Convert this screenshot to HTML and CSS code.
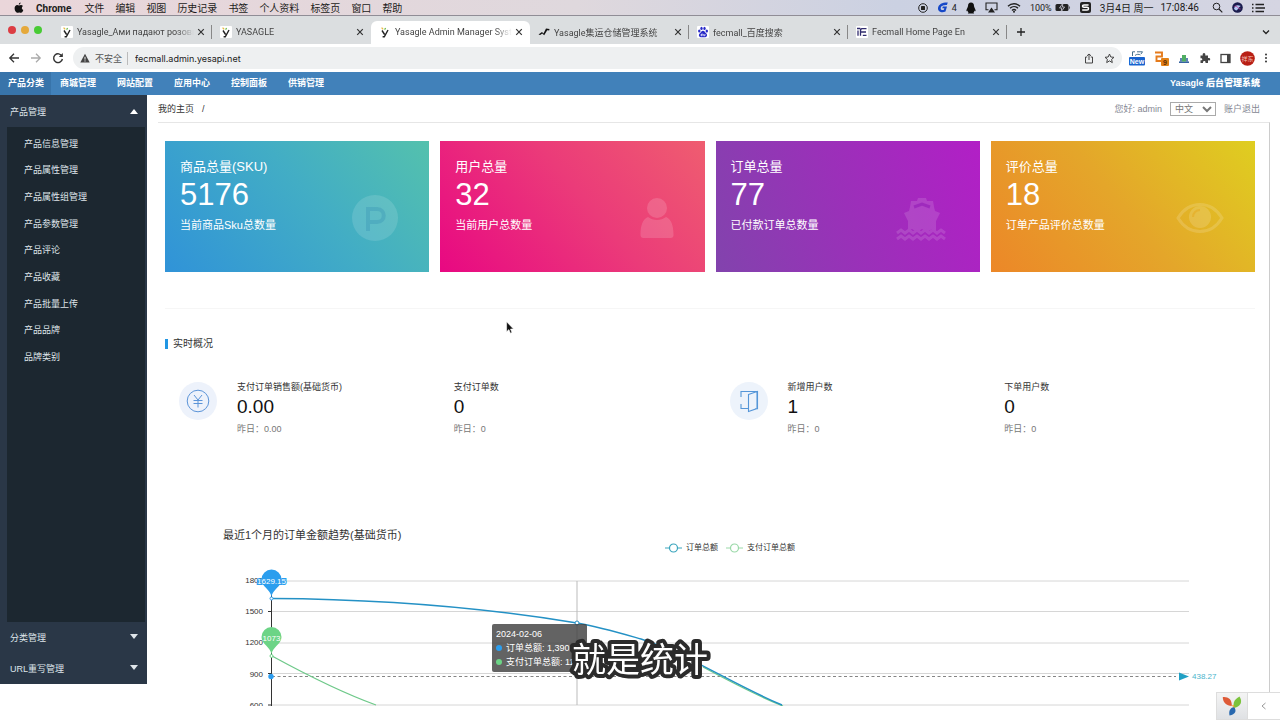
FILE: index.html
```html
<!DOCTYPE html>
<html lang="zh-CN">
<head>
<meta charset="utf-8">
<meta name="viewport" content="width=device-width, initial-scale=1">
<title>Yasagle Admin Manager System</title>
<link rel="stylesheet" href="styles.css">
</head>
<body>
<svg class="defs" width="0" height="0" aria-hidden="true">
  <symbol id="x" viewBox="0 0 8 8"><path d="M1.2 1.2l5.6 5.6M6.8 1.2L1.2 6.8" stroke="#333" stroke-width="1.2" fill="none"/></symbol>
  <symbol id="fav-y" viewBox="0 0 12 12"><rect width="12" height="12" rx="1" fill="#fff"/><path d="M3 4.5l2.6 4M9 4L5.3 10.8H3.6" stroke="#222" stroke-width="1.4" fill="none"/><path d="M2.6 1.6l1.6 1.8" stroke="#e9b63c" stroke-width="1.2"/><path d="M5.6 3.6l1-1.6" stroke="#67b94a" stroke-width="1.2"/></symbol>
</svg>

<header class="menubar">
  <svg class="apple" viewBox="0 0 10 12" width="10" height="12"><path d="M6.6 0.4c.1 1-.8 2.1-1.8 2.1C4.700 1.500 5.600.500 6.600.400zM5 3.400c.500 0 1.100-.500 2-.500.800 0 1.500.400 1.900 1C7.300 5 7.500 7.200 9.300 7.900c-.4 1.200-1.300 2.900-2.300 2.900-.7 0-1-.4-1.900-.4-.8 0-1.200.4-1.900.4C1.900 10.800.6 8.500.6 6.300c0-2 1.200-3.300 2.600-3.300.8 0 1.300.4 1.800.4z" fill="#111"/></svg>
  <nav class="menus">
    <b>Chrome</b><span>文件</span><span>编辑</span><span>视图</span><span>历史记录</span><span>书签</span><span>个人资料</span><span>标签页</span><span>窗口</span><span>帮助</span>
  </nav>
  <div class="status">
    <svg viewBox="0 0 10 10" width="10" height="10"><circle cx="5" cy="5" r="4.300" fill="none" stroke="#222"/><rect x="3" y="3" width="4" height="4" rx=".6" fill="#222"/></svg>
    <span class="pair"><svg viewBox="0 0 12 11" width="12" height="11"><path d="M10.800.5C6 .2 1.500 2 1 6c-.4 4 4 5 7.500 3.600L10 4.600H5.800L5.300 6.300h2l-.4 1.500C5 8.500 3.500 7.800 3.700 6c.3-2.200 3-2.900 6.200-2.900z" fill="#1648c8"/></svg>4</span>
    <svg viewBox="0 0 10 12" width="10" height="12"><path d="M5 .5c2 0 3 1.500 3 3.500 0 1.200 1.600 3 1.600 4.800 0 .6-.6.600-1.200-.2 0 1-.4 1.500-.9 1.900l.7.900H1.800l.7-.9c-.5-.4-.9-.9-.9-1.900-.6.800-1.200.800-1.200.2C.4 7 2 5.200 2 4 2 2 3 .5 5 .5z" fill="#111"/></svg>
    <svg viewBox="0 0 13 11" width="13" height="11"><path d="M3.500 7.800H1V1h11v6.800H9.500" fill="none" stroke="#222" stroke-width="1.100"/><path d="M6.500 5.500l3.500 5H3z" fill="#222"/></svg>
    <svg viewBox="0 0 14 11" width="14" height="11"><g fill="none" stroke="#222" stroke-width="1.400"><path d="M1 4.200c3.400-3.300 8.600-3.300 12 0"/><path d="M3 6.300c2.300-2.200 5.700-2.200 8 0"/><path d="M5 8.400c1.200-1.100 2.800-1.100 4 0"/></g><circle cx="7" cy="9.700" r="1" fill="#222"/></svg>
    <span class="pair">100%<svg viewBox="0 0 16 9" width="16" height="9"><rect x=".5" y="1" width="13" height="7" rx="1.500" fill="#222"/><path d="M14.300 3v3.200c1-.5 1-2.700 0-3.200z" fill="#222"/><path d="M8 0L4.500 5h2.300L6 9l3.600-5H7.300z" fill="#222" stroke="#d6d6e2" stroke-width=".8"/></svg></span>
    <svg viewBox="0 0 11 11" width="11" height="11"><rect width="11" height="11" rx="2" fill="#222"/><path d="M8.600 2.900H4C2 2.900 2 5.300 4 5.300h3c2 0 2 2.700 0 2.700H2.200" fill="none" stroke="#fff" stroke-width="1.500"/></svg>
    <span class="date">3月4日 周一</span><span class="clock">17:08:46</span>
    <svg viewBox="0 0 11 11" width="11" height="11"><circle cx="4.500" cy="4.500" r="3.300" fill="none" stroke="#222"/><path d="M7 7l3.300 3.300" stroke="#222" stroke-width="1.200"/></svg>
    <svg viewBox="0 0 11 11" width="11" height="11"><circle cx="5.500" cy="5.500" r="5.300" fill="#1b1c4e"/><path d="M2 7c1-4 3-4.500 7-3-2 0-2.400 4-5 4.500" fill="#b4c9f5"/><path d="M2.500 4.500C5 3 6 7 8.500 7" stroke="#c04b9c" fill="none"/></svg>
    <svg viewBox="0 0 13 10" width="13" height="10"><path d="M3.500 1.500H12M3.500 5H13M3.500 8.500H12" stroke="#222" stroke-width="1.400"/><path d="M0 1.500h1.500M0 5h1.500M0 8.500h1.500" stroke="#222" stroke-width="1.400"/></svg>
  </div>
</header>

<div class="tabstrip">
  <div class="lights"><i class="red"></i><i class="yellow"></i><i class="green"></i></div>
  <div class="tab sep"><svg class="fav"><use href="#fav-y"/></svg><span class="name">Yasagle_Ами падают розовые</span><button class="close" aria-label="关闭"><svg><use href="#x"/></svg></button></div>
  <div class="tab"><svg class="fav"><use href="#fav-y"/></svg><span class="name">YASAGLE</span><button class="close" aria-label="关闭"><svg><use href="#x"/></svg></button></div>
  <div class="tab active"><svg class="fav"><use href="#fav-y"/></svg><span class="name">Yasagle Admin Manager System</span><button class="close" aria-label="关闭"><svg><use href="#x"/></svg></button></div>
  <div class="tab sep"><svg class="fav" viewBox="0 0 12 12"><path d="M.5 8.500L4 6l1.500 1.500L8 2.500l3.500.5-.3 1.500-2-.3-3 5-2-1.700-2 1.500z" fill="#111"/></svg><span class="name">Yasagle集运仓储管理系统</span><button class="close" aria-label="关闭"><svg><use href="#x"/></svg></button></div>
  <div class="tab sep"><svg class="fav" viewBox="0 0 12 12"><rect width="12" height="12" rx="1" fill="#fff"/><g fill="#2a2bc8"><ellipse cx="2.300" cy="5" rx="1.200" ry="1.600"/><ellipse cx="4.500" cy="2.400" rx="1.200" ry="1.600"/><ellipse cx="7.500" cy="2.400" rx="1.200" ry="1.600"/><ellipse cx="9.800" cy="5" rx="1.200" ry="1.600"/><path d="M6 4.800c1.500 0 2.200 1.800 3.300 2.800 1.500 1.500.7 3.600-1 3.600H3.700c-1.700 0-2.500-2.100-1-3.600C3.800 6.600 4.500 4.800 6 4.800z"/></g><path d="M5.200 7.500v2.200H4V8.400h1.200M6.700 8v1.700h1.300V8" fill="none" stroke="#fff" stroke-width=".7"/></svg><span class="name">fecmall_百度搜索</span><button class="close" aria-label="关闭"><svg><use href="#x"/></svg></button></div>
  <div class="tab sep"><svg class="fav" viewBox="0 0 12 12"><rect width="12" height="12" rx="1" fill="#fff"/><path d="M1 2.500h3.300M2 4.500v5.300M10.500 2.600H6C4.500 2.600 4.500 4 4.500 5v4.800M5 6h5M6.800 9.300h3.700" fill="none" stroke="#302c6e" stroke-width="1.300"/></svg><span class="name">Fecmall Home Page En</span><button class="close" aria-label="关闭"><svg><use href="#x"/></svg></button></div>
  <button class="newtab" aria-label="新标签页"><svg viewBox="0 0 10 10" width="10" height="10"><path d="M5 1v8M1 5h8" stroke="#222" stroke-width="1.300"/></svg></button>
  <button class="more" aria-label="搜索标签页"><svg viewBox="0 0 8 8" width="8" height="8"><path d="M1 2.500l3 3 3-3" fill="none" stroke="#222" stroke-width="1.300"/></svg></button>
</div>

<div class="toolbar">
  <button aria-label="后退"><svg viewBox="0 0 12 12" width="12" height="12"><path d="M11 6H2M6 1.800L1.800 6 6 10.200" fill="none" stroke="#333" stroke-width="1.300"/></svg></button>
  <button aria-label="前进"><svg viewBox="0 0 12 12" width="12" height="12"><path d="M1 6h9M6 1.800L10.200 6 6 10.200" fill="none" stroke="#aaa" stroke-width="1.300"/></svg></button>
  <button aria-label="刷新"><svg viewBox="0 0 12 12" width="12" height="12"><path d="M10 4.200A4.400 4.400 0 1 0 10.400 7" fill="none" stroke="#333" stroke-width="1.400"/><path d="M10.800 1v4H6.800z" fill="#333"/></svg></button>
  <div class="omnibox">
    <svg viewBox="0 0 10 10" width="10" height="10"><path d="M5 .8L9.700 9.500H.3z" fill="#444"/><path d="M5 3.800v2.800M5 7.400v1.100" stroke="#eef0f1"/></svg>
    <label for="url">不安全</label>
    <input id="url" type="text" value="fecmall.admin.yesapi.net">
    <svg viewBox="0 0 10 11" width="10" height="11"><path d="M3.200 4H1.500v6h7V4H6.800M5 7V1M3 2.800L5 1l2 1.800" fill="none" stroke="#444"/></svg>
    <svg viewBox="0 0 11 11" width="11" height="11"><path d="M5.500 1l1.300 3 3.200.3-2.400 2.100.7 3.200-2.800-1.700-2.800 1.700.7-3.200L1 4.300 4.200 4z" fill="none" stroke="#444"/></svg>
  </div>
  <div class="exts">
    <svg viewBox="0 0 16 15" width="16" height="15"><path d="M3.500 5V.8H6M8 .8h5.500L12 3M6 4.500c1.500-1.500 4-1.500 5.500-.5" fill="none" stroke="#47708c"/><rect y="6" width="16" height="8.500" rx="1" fill="#1763cf"/><text x="8" y="13" text-anchor="middle" class="badge">New</text></svg>
    <svg viewBox="0 0 15 15" width="15" height="15"><path d="M1 1.500h7v4H2.500V10H9" fill="none" stroke="#e57b1c" stroke-width="1.900"/><rect x="7" y="7" width="8" height="8" rx="1" fill="#e28016"/><text x="11" y="13.500" text-anchor="middle" class="badge dark">9</text></svg>
    <svg viewBox="0 0 12 12" width="12" height="12"><path d="M1 10.200h10" stroke="#2c5b9c" stroke-width="1.500"/><path d="M3 9.500V6M9 9.500V6" stroke="#2c5b9c" stroke-width="1.500"/><path d="M5 9.500V3M7 9.500V3" stroke="#3da552" stroke-width="1.800"/></svg>
    <svg viewBox="0 0 12 12" width="12" height="12"><path d="M1.500 3.500h2.300c-.5-1.500.2-2.500 1.200-2.500s1.700 1 1.200 2.500H9V6c1.500-.4 2.200.3 2.200 1.200S10.500 8.700 9 8.300V11H6.500c.3-1.300-.5-1.900-1.200-1.900S3.800 9.700 4 11H1.500V8.300c1.300.2 1.800-.4 1.800-1.100S2.700 6 1.500 6.200z" fill="#444"/></svg>
    <svg viewBox="0 0 11 11" width="11" height="11"><rect x="1" y="1.500" width="9" height="8" fill="none" stroke="#444" stroke-width="1.300"/><path d="M7 1.500h3v8H7z" fill="#444"/></svg>
    <svg viewBox="0 0 15 15" width="15" height="15"><circle cx="7.500" cy="7.500" r="7.300" fill="#b81f15"/><text x="7.500" y="10" text-anchor="middle" class="avatar">祥东</text></svg>
    <svg viewBox="0 0 4 10" width="4" height="10"><circle cx="2" cy="1.500" r="1" fill="#333"/><circle cx="2" cy="5" r="1" fill="#333"/><circle cx="2" cy="8.500" r="1" fill="#333"/></svg>
  </div>
</div>

<nav class="topnav">
  <a class="on" href="#">产品分类</a><a href="#">商城管理</a><a href="#">网站配置</a><a href="#">应用中心</a><a href="#">控制面板</a><a href="#">供销管理</a>
  <strong>Yasagle 后台管理系统</strong>
</nav>

<div class="layout">
  <aside class="sidebar">
    <button class="group">产品管理<i class="up"></i></button>
    <div class="sub">
      <ul>
        <li><a href="#">产品信息管理</a></li><li><a href="#">产品属性管理</a></li><li><a href="#">产品属性组管理</a></li><li><a href="#">产品参数管理</a></li><li><a href="#">产品评论</a></li><li><a href="#">产品收藏</a></li><li><a href="#">产品批量上传</a></li><li><a href="#">产品品牌</a></li><li><a href="#">品牌类别</a></li>
      </ul>
    </div>
    <button class="group">分类管理<i class="down"></i></button>
    <button class="group">URL重写管理<i class="down"></i></button>
  </aside>

  <main class="main">
    <div class="crumbs">
      <a href="#">我的主页</a><span>/</span>
      <div class="account"><span>您好: admin</span><select aria-label="语言"><option>中文</option></select><a href="#">账户退出</a></div>
    </div>
    <div class="content">
      <section class="cards">
        <article class="card blue"><h3>商品总量(SKU)</h3><strong>5176</strong><p>当前商品Sku总数量</p>
          <svg viewBox="0 0 52 52"><circle cx="26" cy="26" r="23" fill="#fff" opacity=".13"/><path d="M19 39V17h9c9 0 9 13 0 13h-9" fill="none" stroke="#3793b5" stroke-width="4" opacity=".35"/></svg></article>
        <article class="card pink"><h3>用户总量</h3><strong>32</strong><p>当前用户总数量</p>
          <svg viewBox="0 0 52 52"><g fill="#fff" opacity=".15"><circle cx="32" cy="16" r="10"/><path d="M23 25c5 4 13 4 18 0 5 2 7.500 8 7.500 18 0 2-1 3-3 3h-27c-2 0-3-1-3-3 0-10 2.500-16 7.500-18z"/></g></svg></article>
        <article class="card purple"><h3>订单总量</h3><strong>77</strong><p>已付款订单总数量</p>
          <svg viewBox="0 0 52 52"><g opacity=".13"><path d="M10 15l1-6h6l1-3h8l1 3h6l1 6 1 4 5 2-4 8v10l-4-2-5 3-5-3-5 3-5-3-4 2v-10l-4-8 5-2z" fill="#fff"/><path d="M-3 41l4-3 4 3 4-3 4 3 4-3 4 3 4-3 4 3 4-3 4 3 4-3 4 3M-3 47l4-3 4 3 4-3 4 3 4-3 4 3 4-3 4 3 4-3 4 3 4-3 4 3" fill="none" stroke="#fff" stroke-width="3"/></g><path d="M14 15l8-3 8 3" fill="none" stroke="#9a24ba" stroke-width="3" opacity=".8"/></svg></article>
        <article class="card gold"><h3>评价总量</h3><strong>18</strong><p>订单产品评价总数量</p>
          <svg viewBox="0 0 52 52"><g opacity=".15"><path d="M3 26c11-18 33-18 44 0-11 18-33 18-44 0z" fill="none" stroke="#fff" stroke-width="3"/><circle cx="25" cy="25" r="11" fill="#fff"/></g><path d="M18 25c0-4 3-7 7-7" fill="none" stroke="#e5ae27" stroke-width="2" opacity=".7"/></svg></article>
      </section>
      <hr>
      <h2 class="heading">实时概况</h2>
      <section class="stats">
        <div class="stat-group">
          <svg class="stat-icon" viewBox="0 0 38 38"><circle cx="19" cy="19" r="19" fill="#edf2fb"/><g fill="none" stroke="#5b94d8"><circle cx="19" cy="19" r="10.800"/><path d="M15 13l4 5 4-5M14.500 18.500h9M14.500 21.500h9M19 18v7.500"/></g></svg>
          <dl><dt>支付订单销售额(基础货币)</dt><dd class="num">0.00</dd><dd>昨日：0.00</dd></dl>
          <dl><dt>支付订单数</dt><dd class="num">0</dd><dd>昨日：0</dd></dl>
        </div>
        <div class="stat-group">
          <svg class="stat-icon" viewBox="0 0 38 38"><circle cx="19" cy="19" r="19" fill="#edf3fb"/><path d="M11 15V9.500h16.500v17.300H25M11 22v4.500h7M18.500 12.500l8.500-3v17l-8.500 3z" fill="none" stroke="#5596d8" stroke-width="1.100"/></svg>
          <dl><dt>新增用户数</dt><dd class="num">1</dd><dd>昨日：0</dd></dl>
          <dl><dt>下单用户数</dt><dd class="num">0</dd><dd>昨日：0</dd></dl>
        </div>
      </section>

      <section class="chart">
        <h2>最近1个月的订单金额趋势(基础货币)</h2>
        <div class="legend">
          <span><svg viewBox="0 0 17 10" width="17" height="10"><path d="M0 5h17" stroke="#3aa5bd"/><circle cx="8.500" cy="5" r="4" fill="#fff" stroke="#3aa5bd" stroke-width="1.200"/></svg>订单总额</span>
          <span><svg viewBox="0 0 17 10" width="17" height="10"><path d="M0 5h17" stroke="#9ad9a8"/><circle cx="8.500" cy="5" r="4" fill="#fff" stroke="#9ad9a8" stroke-width="1.200"/></svg>支付订单总额</span>
        </div>
        <div class="plot">
          <svg class="lines" viewBox="165 560 1090 146">
            <path d="M272 581h917M272 611.500h917M272 643h917M272 673.500h917M272 705h917" stroke="#d6d6d6"/>
            <path d="M577 581v124" stroke="#bbb"/>
            <path d="M271.500 581v125M268 611.500h4M268 643h4M268 673.500h4M268 705h4" stroke="#333"/>
            <g class="ticks"><text x="263" y="583">1800</text><text x="263" y="614">1500</text><text x="263" y="645">1200</text><text x="263" y="677">900</text><text x="263" y="708">600</text></g>
            <path d="M272 676.500h904" stroke="#858585" stroke-dasharray="3 2.500"/>
            <path d="M1179 672.500l10 4-10 4z" fill="#21a0c4"/>
            <circle cx="271" cy="676.500" r="2.700" fill="#2c9df0"/>
            <text class="avg" x="1192" y="679">438.27</text>
            <path d="M272 656C305 674 340 692 376 705M703 667C729 681 755 695 783 706" fill="none" stroke="#6fc98a" stroke-width="1.300"/>
            <path d="M272 598.500C370 599 480 607 577 623C600 627 620 633 641 639C690 655 730 683 782 705" fill="none" stroke="#2491c5" stroke-width="1.400"/>
            <circle cx="577" cy="623" r="2" fill="#fff" stroke="#2491c5"/>
            <path d="M271.500 597C270.500 589 261.500 587 261.500 579.500a10 10 0 0 1 20 0C281.500 587 272.500 589 271.500 597z" fill="#2b9eee"/>
            <path d="M271.500 654.500C270.500 646.500 261.500 644.500 261.500 637a10 10 0 0 1 20 0C281.500 644.500 272.500 646.500 271.500 654.500z" fill="#6cd486"/>
            <g class="pins"><text class="pin-blue" x="271.500" y="584">1629.15</text><text x="271.500" y="641">1073</text></g>
            <g fill="#fff"><circle cx="271.500" cy="598.500" r="1.500" stroke="#2b9eee"/><circle cx="271.500" cy="656" r="1.500" stroke="#6cd486"/></g>
          </svg>
          <div class="tooltip"><p>2024-02-06</p><p><i class="b"></i>订单总额: 1,390.</p><p><i class="g"></i>支付订单总额: 11</p></div>
        </div>
      </section>
    </div>
  </main>
</div>

<svg class="caption" width="160" height="48" viewBox="0 0 160 48"><text x="80" y="36">就是统计</text></svg>
<div class="debugbar">
  <a href="#" aria-label="Yii"><svg viewBox="0 0 20 20" width="20" height="20"><path d="M.8 1C6 .5 10 3 9.800 10 4.500 9.500.8 7 .8 1z" fill="#de5a37"/><path d="M17.500.5c3.500 5.500 1 10-5.500 11.500-1.500-5 .5-9 5.500-11.500z" fill="#7bc33c"/><path d="M12 11c3 3.500 1.500 7.500-4.500 8.500-1-4.500.5-7.500 4.500-8.500z" fill="#2868ae"/><path d="M9.500 9.500l3 2.500-.5-3z" fill="#f0a83a"/></svg></a>
  <button aria-label="展开"><svg viewBox="0 0 8 8" width="8" height="8"><path d="M5.500 1L2 4l3.500 3" fill="none" stroke="#999"/></svg></button>
</div>
<svg class="cursor" viewBox="0 0 8 13" width="8" height="13"><path d="M.6.8v10l2.300-2.200 1.500 3.600 1.600-.7-1.500-3.500h3z" fill="#111" stroke="#fff" stroke-width=".6"/></svg>
</body>
</html>
```
FILE: styles.css
```css
* { box-sizing: border-box; }
body, h2, h3, p, ul, dl, dd { margin: 0; padding: 0; }
body {
  height: 100vh;
  overflow: hidden;
  display: flex;
  flex-direction: column;
  background: #fff;
  color: #333;
  font: 9px "Liberation Sans", "Noto Sans CJK SC", sans-serif;
}
button { border: 0; padding: 0; background: none; font: inherit; color: inherit; display: flex; align-items: center; justify-content: center; }
a { color: inherit; text-decoration: none; }
svg { flex: none; display: block; }
.defs { position: absolute; }

.menubar {
  flex: none; height: 15px; padding: 0 15px 0 14px;
  display: flex; align-items: center;
  background: linear-gradient(90deg, #ead6da, #dfd8dd 45%, #cbd1e2 70%, #d5d5e2);
  color: #1c1c20;
  font: 10px Roboto, "Noto Sans CJK SC", sans-serif;
}
.menus { display: flex; align-items: baseline; gap: 11px; margin-left: 12px; white-space: nowrap; }
.menus b { margin-right: 2px; }
.status { margin-left: auto; display: flex; align-items: center; gap: 9px; font-size: 9px; white-space: nowrap; }
.pair { display: flex; align-items: center; gap: 3px; }
.date, .clock { font-size: 10px; }
.clock { margin: 0 4px 0 -2px; }

.tabstrip {
  flex: none; height: 29px; border-top: 1px solid #908d96;
  padding: 5px 10px 1px 8px; display: flex; align-items: center;
  background: #dbdee0; color: #444;
  font: 9px Roboto, "Noto Sans CJK SC", sans-serif;
}
.lights { display: flex; gap: 5px; width: 45px; flex: none; margin-bottom: 5px; }
.lights i { width: 8px; height: 8px; border-radius: 50%; }
.red { background: #dc3d43; }
.yellow { background: #e5a93b; }
.green { background: #48cb35; }
.tab { flex: 0 1 159px; min-width: 0; height: 23px; padding: 0 7px 0 8px; display: flex; align-items: center; }
.tab.active { background: #fff; border-radius: 6px 6px 0 0; }
.tab.sep { background: linear-gradient(#888, #888) right center / 1px 14px no-repeat; }
.fav { width: 12px; height: 12px; margin-right: 4px; }
.name { flex: 1; min-width: 0; overflow: hidden; white-space: nowrap; mask-image: linear-gradient(90deg, #000 85%, transparent); }
.close { margin-left: 3px; }
.close svg { width: 8px; height: 8px; }
.newtab { margin-left: 9px; }
.more { margin-left: auto; }

.toolbar { flex: none; height: 28px; padding: 0 12px 0 8px; display: flex; align-items: center; gap: 10px; background: #fff; }
.omnibox {
  flex: 1; min-width: 0; height: 22px; padding: 0 7px; margin-left: -1px;
  border-radius: 11px; background: #eef0f1;
  display: flex; align-items: center; gap: 5px; color: #555;
}
.omnibox label { padding-right: 5px; border-right: 1px solid #bbb; white-space: nowrap; }
.omnibox input { flex: 1; min-width: 0; border: 0; padding: 0 0 0 2px; background: none; outline: 0; color: #222; font: 9px Inter, sans-serif; }
.omnibox svg:last-child { margin: 0 0 0 5px; }
.exts { display: flex; align-items: center; gap: 9px; margin-left: -3px; }
.badge { font: bold 7px "Liberation Sans", sans-serif; fill: #fff; }
.badge.dark { fill: #5a2b05; }
.avatar { font: 6px "Noto Sans CJK SC", sans-serif; fill: #f3c0b8; }

.topnav {
  flex: none; height: 23px; display: flex; padding-right: 20px; line-height: 23px;
  background: #4181ba; color: #fff; font-weight: bold; white-space: nowrap;
}
.topnav a { padding: 0 12px 0 9px; }
.topnav .on { padding: 0 7px 0 8px; background: #3874aa; }
.topnav strong { margin-left: auto; }

.layout { flex: 1; min-height: 0; display: flex; }
.sidebar { flex: none; width: 147px; margin-bottom: 36px; display: flex; flex-direction: column; background: #2a3747; color: #dfe5ea; }
.group { flex: none; height: 32px; padding: 0 9px 0 10px; justify-content: space-between; }
.sub ~ .group { height: 31px; }
.group i { border: 4px solid transparent; }
.group .up { border-top: 0; border-bottom: 5px solid #fff; }
.group .down { border-bottom: 0; border-top: 5px solid #dfe5ea; margin-bottom: 2px; }
.sub { flex: 1; min-height: 0; margin: 0 2px 0 7px; padding-top: 3px; background: #1c2730; overflow: hidden; }
.sub ul { height: 240px; list-style: none; display: grid; grid-auto-rows: 1fr; align-items: center; padding-left: 17px; }

.main { flex: 1; min-width: 0; display: flex; flex-direction: column; padding: 0 10px 14px 11px; }
.crumbs { flex: none; height: 27px; padding-right: 10px; display: flex; align-items: center; gap: 8px; }
.account { margin-left: auto; display: flex; align-items: center; gap: 8px; color: #858793; }
.account select { width: 46px; height: 14px; padding: 0; border: 1px solid #aaa; border-radius: 0; background: #fff; color: #777; font: inherit; }
.content { flex: 1; min-height: 0; overflow: hidden; border-top: 1px solid #e6e6e6; border-right: 1px solid #ccc; padding: 18px 14px 0 7px; }

.cards { display: grid; grid-template-columns: repeat(4, 1fr); gap: 11px; }
.card { position: relative; padding: 17px 15px 36px; color: #fff; white-space: nowrap; }
.card h3 { font-size: 13px; font-weight: normal; line-height: 18px; }
.card strong { display: block; font-size: 31px; font-weight: normal; line-height: 38px; }
.card p { font-size: 11px; line-height: 22px; }
.card svg { position: absolute; right: 28px; top: 51px; width: 52px; height: 52px; overflow: visible; }
.blue { background: linear-gradient(50deg, #3093d8, #42adc5 55%, #54c1ad); }
.pink { background: linear-gradient(50deg, #e80882, #eb3b79 55%, #ef5d70); }
.purple { background: linear-gradient(70deg, #8243ad, #9b30b9 50%, #b21fc6); }
.gold { background: linear-gradient(50deg, #ec8728, #e4a62a 50%, #dfce20); }
hr { margin: 36px 0 0; border: 0; height: 1px; background: #f6f6f6; }
.heading { margin-top: 27px; padding-left: 8px; font-size: 10px; line-height: 16px; font-weight: normal; background: linear-gradient(#2196e3, #2196e3) left center / 3px 10px no-repeat; }

.stats { margin-top: 28px; display: grid; grid-template-columns: 1fr 1fr; gap: 11px; }
.stat-group { display: grid; grid-template-columns: 58px 1fr 1fr; padding: 0 34px 0 14px; }
.stat-icon { width: 38px; height: 38px; margin-top: 2px; }
.stats dt { line-height: 14px; white-space: nowrap; }
.stats dd { line-height: 18px; color: #777; }
.stats .num { font-size: 19px; line-height: 26px; color: #111; }

.chart { margin-top: 89px; }
.chart h2 { padding-left: 58px; font-size: 11px; line-height: 16px; font-weight: normal; }
.legend { display: flex; justify-content: center; gap: 8px; padding-left: 40px; font-size: 8px; line-height: 10px; }
.legend span { display: flex; gap: 4px; }
.plot { position: relative; margin-top: 7px; }
.lines { width: 100%; height: auto; }
.ticks { font-size: 8px; fill: #333; text-anchor: end; }
.pins { font-size: 8px; fill: #fff; text-anchor: middle; }
.pin-blue { stroke: #2b9eee; stroke-width: 2px; paint-order: stroke; }
.avg { font-size: 8px; fill: #4bb4cc; }
.tooltip {
  position: absolute; left: 30%; top: 64px; width: 95px; padding: 3px 4px;
  overflow: hidden; border-radius: 2px; background: rgba(65, 65, 65, .82); color: #fff;
  line-height: 14px; white-space: nowrap;
}
.tooltip i { display: inline-block; width: 6px; height: 6px; margin-right: 4px; border-radius: 50%; }
.tooltip .b { background: #2b9eee; }
.tooltip .g { background: #6cd486; }

.caption { position: fixed; left: 0; right: 0; bottom: 36px; margin: 0 auto; pointer-events: none; }
.caption text {
  font: 34px "Noto Sans CJK SC", sans-serif; text-anchor: middle; fill: #fff;
  stroke: #2b2b2b; stroke-width: 8px; stroke-linejoin: round; paint-order: stroke;
}
.debugbar { position: fixed; right: 0; bottom: 0; display: flex; height: 28px; border: 1px solid #ddd; border-right: 0; background: #fff; }
.debugbar a { width: 31px; display: flex; align-items: center; justify-content: center; background: linear-gradient(#f4f4f4, #dfe1e4); border-right: 1px solid #ddd; }
.debugbar button { width: 32px; }
.cursor { position: fixed; left: 506px; top: 321px; }
```
